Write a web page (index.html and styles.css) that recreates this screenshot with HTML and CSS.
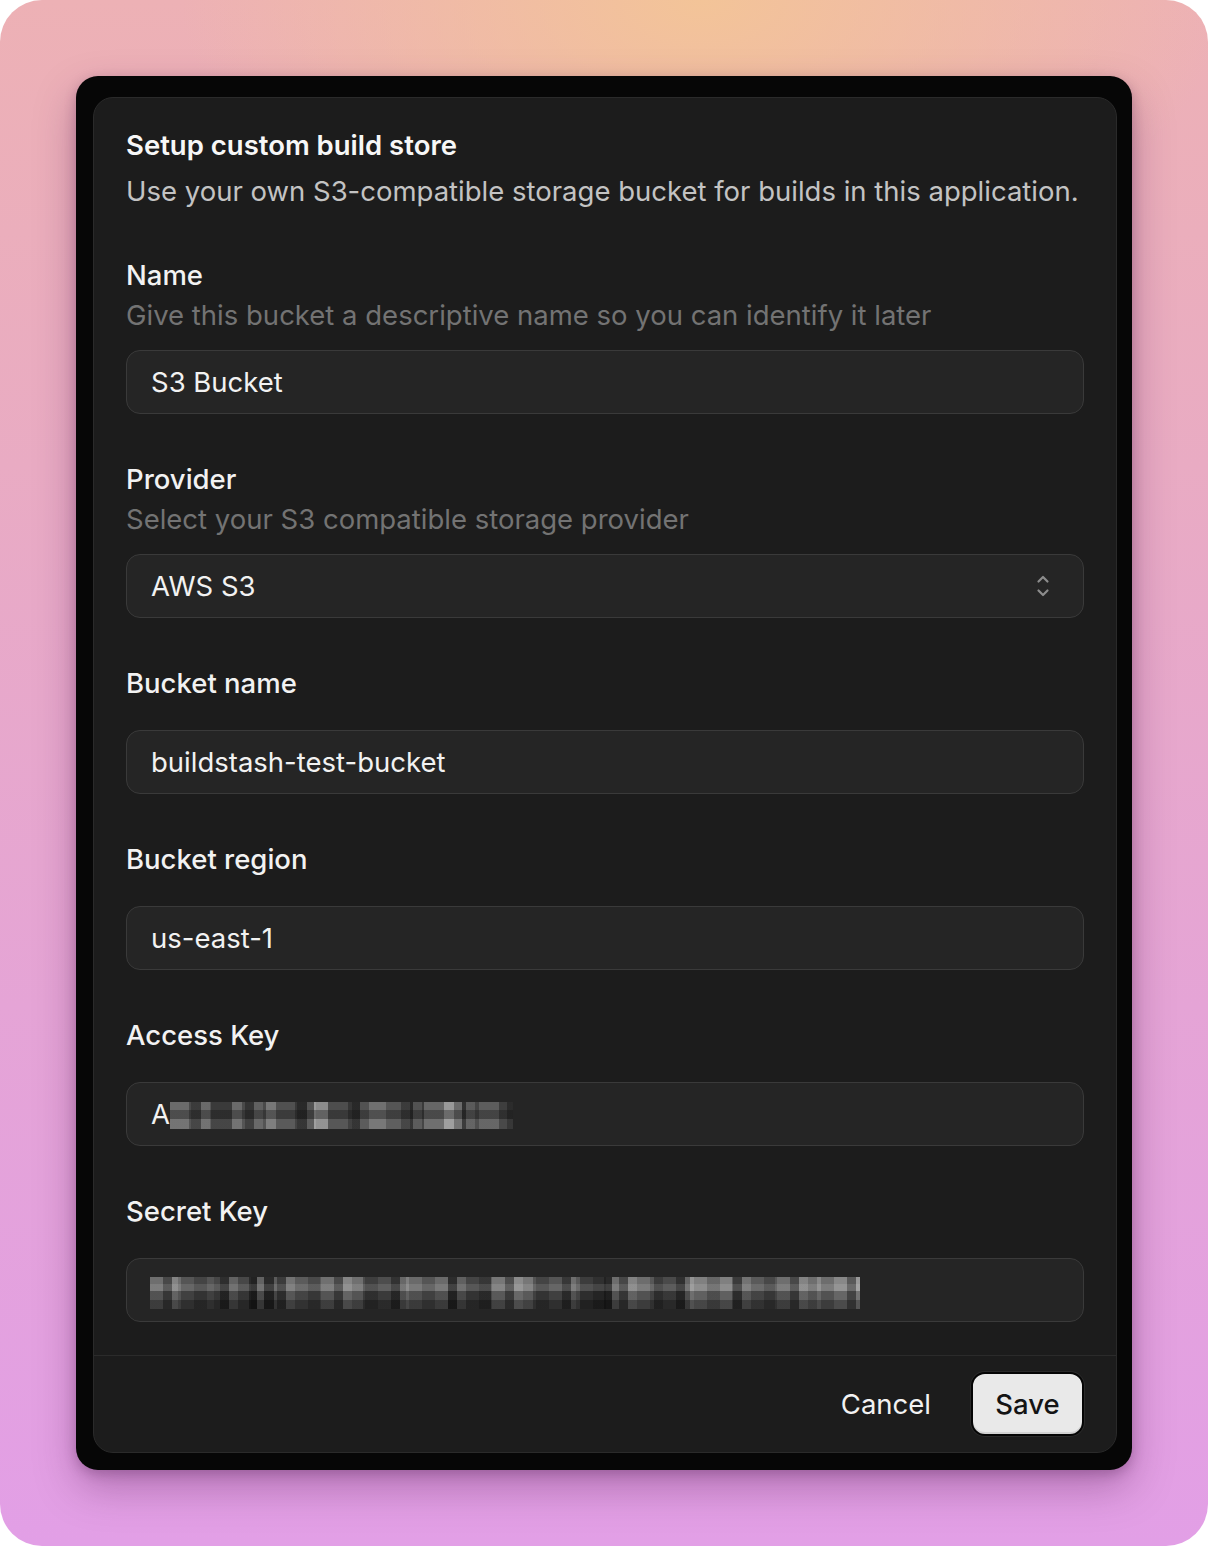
FILE: index.html
```html
<!DOCTYPE html>
<html lang="en">
<head>
<meta charset="utf-8">
<title>Setup custom build store</title>
<link rel="stylesheet" href="styles.css">
</head>
<body>
<div class="page">
  <div class="frame">
    <div class="card">
      <div class="body">
        <header class="head">
          <h1 class="title">Setup custom build store</h1>
          <p class="subtitle">Use your own S3-compatible storage bucket for builds in this application.</p>
        </header>

        <div class="field">
          <div class="label">Name</div>
          <div class="desc">Give this bucket a descriptive name so you can identify it later</div>
          <div class="input with-desc">S3 Bucket</div>
        </div>

        <div class="field">
          <div class="label">Provider</div>
          <div class="desc">Select your S3 compatible storage provider</div>
          <div class="input with-desc select">
            <span>AWS S3</span>
            <svg class="chev" width="16" height="28" viewBox="0 0 16 28" fill="none" stroke="#8c8c8c" stroke-width="2.2" stroke-linecap="round" stroke-linejoin="round"><path d="M3.5 9.5 L8 5 L12.5 9.5"/><path d="M3.5 18.5 L8 23 L12.5 18.5"/></svg>
          </div>
        </div>

        <div class="field">
          <div class="label">Bucket name</div>
          <div class="input">buildstash-test-bucket</div>
        </div>

        <div class="field">
          <div class="label">Bucket region</div>
          <div class="input">us-east-1</div>
        </div>

        <div class="field">
          <div class="label">Access Key</div>
          <div class="input"><span>A</span><span class="redact redact-a"></span></div>
        </div>

        <div class="field">
          <div class="label">Secret Key</div>
          <div class="input secret"><span class="redact redact-s"></span></div>
        </div>
      </div>
      <footer class="foot">
        <button class="btn cancel">Cancel</button>
        <button class="btn save">Save</button>
      </footer>
    </div>
  </div>
</div>
</body>
</html>
```
FILE: styles.css
```css
* { box-sizing: border-box; }
html, body { margin: 0; padding: 0; background: #ffffff; }
body {
  font-family: Inter, "Noto Sans", "Liberation Sans", sans-serif;
  -webkit-font-smoothing: antialiased;
}
.page {
  width: 1208px;
  height: 1546px;
  border-radius: 42px;
  overflow: hidden;
  padding: 76px 76px 0 76px;
  background:
    radial-gradient(ellipse 520px 300px at 58% 0%, rgba(243,196,152,1) 0%, rgba(243,196,152,0.6) 40%, rgba(243,196,152,0) 100%),
    linear-gradient(180deg, #edb1b5 0%, #e9abc3 30%, #e5a4d6 65%, #e29fe6 100%);
}
.frame {
  width: 1056px;
  height: 1394px;
  background: #060606;
  border-radius: 22px;
  padding: 21px 15px 17px 17px;
  box-shadow: 0 18px 40px rgba(90, 30, 90, 0.35), 0 4px 12px rgba(60, 20, 60, 0.25);
}
.card {
  width: 1024px;
  height: 1356px;
  background: #1c1c1c;
  border: 1px solid #2a2a2a;
  border-radius: 20px;
  display: flex;
  flex-direction: column;
  overflow: hidden;
}
.body {
  flex: none;
  padding: 29px 32px 33px 32px;
}
.head { margin-bottom: 48px; }
.title {
  margin: 0;
  font-size: 27.5px;
  line-height: 36px;
  font-weight: 600;
  color: #f7f7f7;
}
.subtitle {
  margin: 10px 0 0 0;
  font-size: 27.5px;
  line-height: 36px;
  font-weight: 400;
  color: #c3c3c3;
}
.field { margin-bottom: 47px; }
.field:last-child { margin-bottom: 0; }
.label {
  font-size: 27.5px;
  line-height: 36px;
  font-weight: 500;
  color: #f2f2f2;
}
.desc {
  margin-top: 4px;
  font-size: 27.5px;
  line-height: 36px;
  color: #737373;
}
.input {
  margin-top: 29px;
  height: 64px;
  border: 1px solid #3a3a3a;
  border-radius: 14px;
  background: #252525;
  padding: 0 24px;
  display: flex;
  align-items: center;
  font-size: 27.5px;
  color: #f2f2f2;
}
.input.with-desc { margin-top: 17px; }
.select { justify-content: space-between; padding-right: 32px; }
.chev { display: block; }
.secret { padding-left: 23px; }
.redact { display: inline-block; }
.redact-a {
  width: 343px;
  height: 27px;
  margin-top: 2px;
  background:
    linear-gradient(180deg, rgba(0,0,0,0) 0 30%, rgba(20,20,20,0.35) 30% 62%, rgba(255,255,255,0.06) 62% 100%),
    repeating-linear-gradient(90deg, rgba(0,0,0,0) 0 19px, rgba(0,0,0,0.3) 19px 31px, rgba(255,255,255,0.12) 31px 40px, rgba(0,0,0,0) 40px 53px),
    linear-gradient(90deg, #6b6b6b 0 6%, #555 6% 12%, #3a3a3a 12% 18%, #6a6a6a 18% 22%, #4a4a4a 22% 28%, #777 28% 31%, #505050 31% 37%, #3b3b3b 37% 42%, #8c8c8c 42% 46%, #4d4d4d 46% 53%, #3a3a3a 53% 58%, #707070 58% 63%, #555 63% 70%, #3a3a3a 70% 74%, #666 74% 80%, #999 80% 85%, #444 85% 90%, #5d5d5d 90% 96%, #3e3e3e 96% 100%);
}
.redact-s {
  width: 710px;
  height: 32px;
  margin-top: 6px;
  background:
    linear-gradient(180deg, rgba(0,0,0,0) 0 22%, rgba(255,255,255,0.1) 22% 45%, rgba(0,0,0,0.25) 45% 72%, rgba(0,0,0,0.45) 72% 100%),
    repeating-linear-gradient(90deg, rgba(0,0,0,0) 0 13px, rgba(0,0,0,0.35) 13px 22px, rgba(255,255,255,0.15) 22px 31px, rgba(0,0,0,0) 31px 44px, rgba(0,0,0,0.2) 44px 57px),
    linear-gradient(90deg, #6e6e6e 0 4%, #555 4% 9%, #474747 9% 14%, #2a2a2a 14% 15%, #7a7a7a 15% 16%, #2a2a2a 16% 17.5%, #5b5b5b 17.5% 24%, #707070 24% 30%, #4d4d4d 30% 36%, #6a6a6a 36% 42%, #444 42% 48%, #777 48% 54%, #555 54% 60%, #3c3c3c 60% 64%, #2a2a2a 64% 65%, #6d6d6d 65% 71%, #4a4a4a 71% 76%, #808080 76% 82%, #5a5a5a 82% 88%, #6e6e6e 88% 94%, #888 94% 100%);
}
.foot {
  border-top: 1px solid #2b2b2b;
  padding: 16px 32px 16px 32px;
  display: flex;
  justify-content: flex-end;
  align-items: center;
  gap: 16px;
}
.btn {
  font-family: inherit;
  font-size: 27.5px;
  height: 64px;
  border-radius: 14px;
  cursor: pointer;
}
.cancel {
  background: transparent;
  border: none;
  color: #f2f2f2;
  padding: 0 24px;
}
.save {
  width: 113px;
  background: #e9e9e9;
  color: #141414;
  border: 2px solid #050505;
  box-shadow: 0 0 0 1px #2a2a2a, inset 0 -2px 0 #d2d2d2;
  font-weight: 500;
  padding: 0;
}
```
